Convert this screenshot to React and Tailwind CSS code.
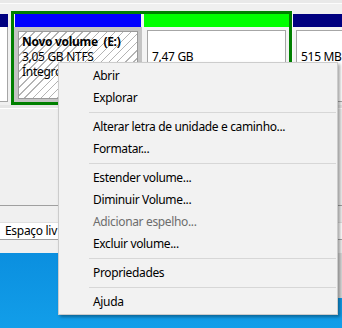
const hatch =
  "bg-[image:repeating-linear-gradient(135deg,#ffffff_0px,#ffffff_4.6px,#b4b4b4_4.6px,#b4b4b4_5.7px)]";

function MenuItem({ label, disabled = false }) {
  return (
    <div
      className={`h-[22px] flex items-center pl-[34px] text-[12px] tracking-[-0.35px] ${
        disabled ? "text-[#6d6d6d]" : "text-black"
      }`}
    >
      {label}
    </div>
  );
}

function Separator() {
  return (
    <div className="h-[7px] flex items-center pl-[30px] pr-px">
      <div className="h-px w-full bg-[#d7d7d7]" />
    </div>
  );
}

function ContextMenu() {
  return (
    <div className="absolute left-[58px] top-[62px] w-[280px] h-[253px] bg-[#f2f2f2] border border-[#cccccc] pt-[2px] shadow-[2px_2px_3px_rgba(0,0,0,0.35)]">
      <MenuItem label="Abrir" />
      <MenuItem label="Explorar" />
      <Separator />
      <MenuItem label="Alterar letra de unidade e caminho..." />
      <MenuItem label="Formatar..." />
      <Separator />
      <MenuItem label="Estender volume..." />
      <MenuItem label="Diminuir Volume..." />
      <MenuItem label="Adicionar espelho..." disabled />
      <MenuItem label="Excluir volume..." />
      <Separator />
      <MenuItem label="Propriedades" />
      <Separator />
      <MenuItem label="Ajuda" />
    </div>
  );
}

function PlainCell({ width, header, lines }) {
  return (
    <div className={`${width} shrink-0 flex flex-col bg-white`}>
      <div className={`h-[13px] ${header}`} />
      <div className="flex-1 p-[3px] bg-[#f4f4f4]">
        <div className="h-full border border-[#a6a6a6] bg-white pt-[3px] pl-[4px] leading-[15px] text-[12px] tracking-[-0.3px] text-black whitespace-nowrap overflow-hidden">
          {lines.map((l, i) => (
            <div key={i}>{l || "\u00a0"}</div>
          ))}
        </div>
      </div>
    </div>
  );
}

export default function App() {
  return (
    <div
      className="relative w-[342px] h-[328px] overflow-hidden bg-[#f0f0f0]"
      style={{ fontFamily: '"Noto Sans", "Open Sans", sans-serif' }}
    >
      {/* top strip */}
      <div className="h-[3px] bg-[#e9e9e9]" />
      <div className="h-px bg-[#fcfcfc]" />
      <div className="h-[7px] bg-[#f0f0f0]" />

      {/* disk row */}
      <div className="h-[94px] flex">
        <div className="w-[11px] shrink-0 pt-[3px]">
          <div className="w-[8px] h-[13px] bg-[#000080]" />
          <div className="w-[8px] h-[75px] bg-white border-r border-b border-[#a6a6a6]" />
        </div>

        <div className="w-[281px] shrink-0 border-[3px] border-[#008000] flex gap-[2px] bg-[#f4f4f4]">
          <div className="w-[128px] shrink-0 flex flex-col">
            <div className="h-[13px] bg-[#0000ff] mx-px" />
            <div className="flex-1 bg-[#c4c4c4] p-[4px] pb-[3px]">
              <div
                className={`h-full border border-[#9a9a9a] ${hatch} pt-[2px] pl-[3px] leading-[15px] text-[12px] tracking-[-0.3px] text-black whitespace-nowrap overflow-hidden`}
              >
                <div className="font-bold">Novo volume&nbsp;&nbsp;(E:)</div>
                <div>3,05 GB NTFS</div>
                <div>Íntegro</div>
              </div>
            </div>
          </div>
          <PlainCell width="w-[145px]" header="bg-[#00ff00]" lines={["", "7,47 GB"]} />
        </div>

        <div className="w-px shrink-0 bg-[#fafafa]" />
        <div className="flex-1 pt-[3px] flex">
          <PlainCell width="w-[60px]" header="bg-[#000080]" lines={["", "515 MB"]} />
        </div>
      </div>

      {/* lower panel */}
      <div className="h-[3px] bg-[#e6e6e6]" />
      <div className="h-px bg-white" />
      <div className="h-[96px] bg-[#f0f0f0]" />
      <div className="h-px bg-[#a0a0a0]" />
      <div className="h-[16px] bg-[#f0f0f0]" />
      <div className="h-[17px] bg-white border-t border-[#e0e0e0] flex items-center pl-[5px] text-[12px] tracking-[-0.3px] text-black whitespace-nowrap">
        Espaço liv
      </div>
      <div className="h-px bg-[#a0a0a0]" />
      <div className="h-[13px] bg-[#f0f0f0]" />

      {/* desktop */}
      <div className="h-[75px] bg-[linear-gradient(180deg,#0b8fdf,#129ee9)] flex justify-end">
        <div className="w-[4px] h-[45px] bg-[#d9d9d9]" />
      </div>

      <ContextMenu />
    </div>
  );
}
